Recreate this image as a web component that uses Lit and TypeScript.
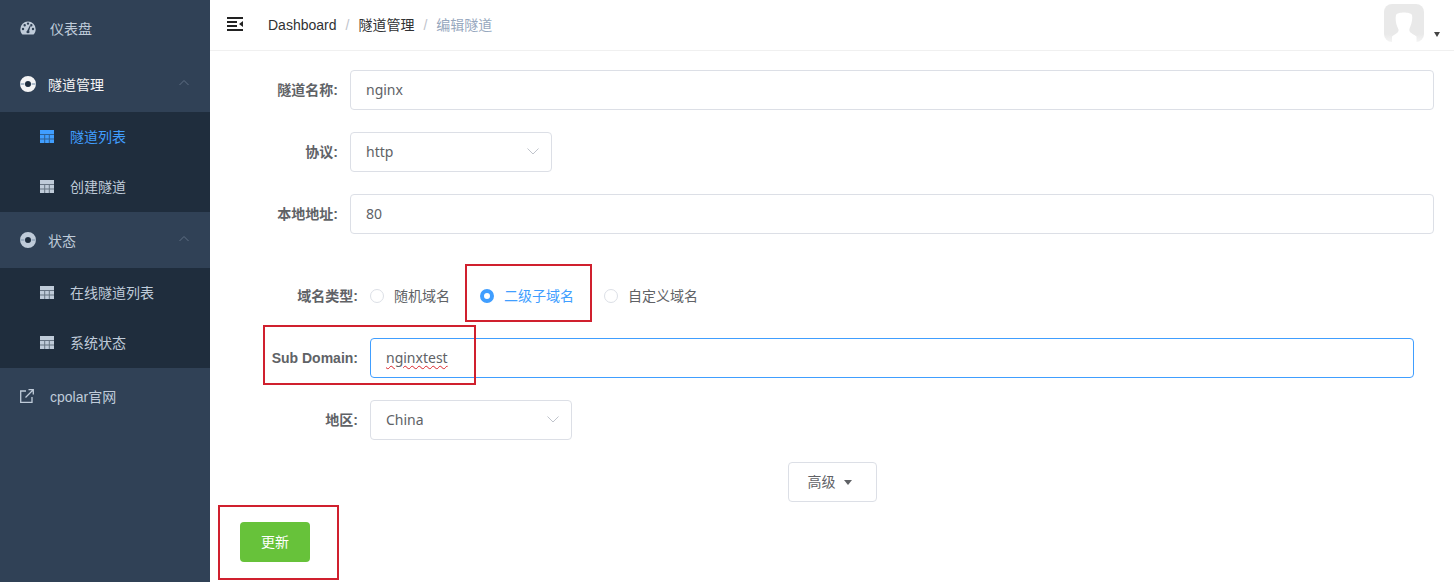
import { LitElement, html, css, svg } from "lit";
import { customElement } from "lit/decorators.js";

const gauge = svg`<svg width="16" height="14" viewBox="0 0 16 14"><path fill="currentColor" fill-rule="evenodd" d="M8 0.5a7.7 7.7 0 0 0-7.7 7.7c0 1.9.7 3.7 1.9 5 .2.2.4.3.7.3h10.200c.3 0 .5-.1.7-.3 1.200-1.300 1.900-3.100 1.900-5A7.700 7.700 0 0 0 8 .5zM3 9.200a1.200 1.200 0 1 1 0-2.400 1.200 1.200 0 0 1 0 2.400zm1.700-3.700a1.200 1.200 0 1 1 0-2.400 1.200 1.200 0 0 1 0 2.400zM8 3.800a1.200 1.200 0 1 1 0-2.400 1.200 1.200 0 0 1 0 2.400zm1.600 7.400a1.700 1.700 0 0 1-3.200 0c0-.6.300-1.100.8-1.400l2.800-5.500 .7.300-1.600 5.500c.3.300.5.700.5 1.100zm1.700-5.700a1.200 1.200 0 1 1 0-2.400 1.200 1.200 0 0 1 0 2.400zM13 9.200a1.200 1.200 0 1 1 0-2.400 1.200 1.200 0 0 1 0 2.400z"/></svg>`;
const buoy = svg`<svg width="16" height="16" viewBox="0 0 16 16"><circle cx="8" cy="8" r="5.500" fill="none" stroke="currentColor" stroke-width="5"/><path d="M.4 7.100h4v1.800h-4zM11.600 7.100h4v1.800h-4z" fill="#8fa2b8" opacity=".7"/><circle cx="8" cy="8" r="2.600" fill="#1f2d3d"/></svg>`;
const table = svg`<svg width="14" height="13" viewBox="0 0 14 13"><path fill="currentColor" d="M0 0h14v13H0z"/><path fill="#1f2d3d" opacity=".55" d="M0 4h14v1H0zM0 8.500h14v1H0zM4.200 4h1v9h-1zM8.800 4h1v9h-1z"/></svg>`;
const link = svg`<svg width="14" height="14" viewBox="0 0 14 14" fill="none" stroke="currentColor" stroke-width="1.300"><path d="M6 2H.7v11.300H12V8"/><path d="M5.500 8.500 13 1M8.500.7h4.800v4.800"/></svg>`;
const chevron = svg`<svg width="12" height="7" viewBox="0 0 12 7" fill="none" stroke="currentColor" stroke-width="1"><path d="M1.500 6 6 1.500 10.500 6"/></svg>`;
const chevDown = svg`<svg width="14" height="8" viewBox="0 0 14 8" fill="none" stroke="currentColor" stroke-width="1"><path d="M1.500 1.500 7 7l5.500-5.500"/></svg>`;
const burger = svg`<svg width="16" height="14" viewBox="0 0 16 14"><path fill="#222" d="M0 0h16v2H0zM0 4h10v2H0zM0 8h10v2H0zM0 12h16v2H0zM16 4v6l-4-3z"/></svg>`;
const person = svg`<svg width="40" height="40" viewBox="0 0 40 40"><defs><linearGradient id="av" x1="0" y1="0" x2="0" y2="1"><stop offset=".8" stop-color="#e9e9e9"/><stop offset="1" stop-color="#f4f4f4"/></linearGradient></defs><rect y="1" width="40" height="38" rx="8" fill="url(#av)"/><path fill="#fff" d="M12 12c1-3.500 15-3.500 16 0 .8 3-.2 8-1.500 11-.8 2-1.500 3.500-1 5 .6 2 4.500 3.500 7 5.500V40H8v-6.500c2.500-2 6-3.500 6.500-5.500.4-1.500-.7-3-1.500-5-1.200-3-1.800-8-1-11z"/></svg>`;

@customElement("app-root")
export class AppRoot extends LitElement {
  static styles = css`
    :host { display: block; width: 1454px; height: 582px; overflow: hidden; position: relative; background: #fff;
      font-family: "Liberation Sans", "Noto Sans CJK SC", sans-serif; font-size: 14px; color: #606266; }
    .layout { display: flex; height: 582px; }
    .side { width: 210px; flex: none; background: #304156; color: #bfcbd9; display: flex; flex-direction: column; }
    .item { height: 56px; display: flex; align-items: center; padding-left: 20px; flex: none; }
    .item .ic { width: 30px; display: flex; flex: none; }
    .item.sub-head .ic { width: 28px; }
    .item.sub-head { padding-bottom: 1px; box-sizing: border-box; }
    .item.active { color: #f4f4f5; }
    .item .chev { margin-left: auto; margin-right: 20px; display: flex; color: #5f6f84; margin-top: -3px; }
    .sub { background: #1f2d3d; display: flex; flex-direction: column; }
    .sub a { height: 50px; box-sizing: border-box; padding-bottom: 2px; display: flex; align-items: center; padding-left: 40px; }
    .sub a .ic { width: 30px; display: flex; flex: none; }
    .sub a.on { color: #409eff; }
    .main { flex: 1; min-width: 0; display: flex; flex-direction: column; }
    .top { height: 50px; flex: none; box-sizing: content-box; border-bottom: 1px solid #f0f0f0; display: flex; align-items: center; padding: 0 30px 0 17px; margin-bottom: -1px; }
    .burger { display: flex; margin-right: 25px; margin-top: -2px; }
    .crumbs { display: flex; align-items: center; color: #303133; margin-top: -1px; }
    .crumbs i { font-style: normal; color: #c0c4cc; margin: 0 9px; }
    .crumbs .cjk { padding-bottom: 2px; }
    .crumbs .last { color: #97a8be; }
    .avatar { margin-left: auto; display: flex; align-items: flex-end; gap: 10px; margin-top: -4px; margin-right: -16px; }
    .caret { width: 0; height: 0; border: 3.500px solid transparent; border-top: 5px solid #444; border-bottom: 0; margin-bottom: 6px; }
    .avatar svg { display: block; }
    .form { padding: 20px 20px 0 10px; display: flex; flex-direction: column; gap: 22px; }
    .row { display: flex; align-items: center; min-height: 40px; }
    .row > label { width: 130px; flex: none; box-sizing: border-box; padding-right: 12px; padding-bottom: 2px; text-align: right; font-weight: 700; color: #606266; }
    .row > label.en { padding-bottom: 0; }
    .box { height: 40px; flex: 1; box-sizing: border-box; border: 1px solid #dcdfe6; border-radius: 4px; padding: 0 15px 2px; font: inherit; font-family: "Noto Sans", "Noto Sans CJK SC", sans-serif; color: #606266; outline: none; background: #fff; min-width: 0; }
    .box.focus { border-color: #409eff; display: flex; align-items: center; }
    .wavy { text-decoration: underline wavy #d9262c; text-decoration-thickness: 1px; text-underline-offset: 2px; }
    .select { flex: none; width: 202px; display: flex; align-items: center; justify-content: space-between; color: #606266; padding-right: 11px; }
    .select span { display: flex; color: #c0c4cc; }
    .nested { padding: 0 20px; display: flex; flex-direction: column; gap: 22px; margin-top: 20px; }
    .radios { display: flex; align-items: center; }
    .radio { display: flex; align-items: center; margin-right: 30px; color: #606266; padding-bottom: 2px; }
    .radio b { width: 14px; height: 14px; box-sizing: border-box; border: 1px solid #dcdfe6; border-radius: 50%; margin-right: 10px; margin-top: 2px; display: block; background: #fff; }
    .radio.on { color: #409eff; }
    .radio.on b { border: 4.500px solid #409eff; }
    .more { display: flex; justify-content: center; padding-left: 11px; }
    .btn { height: 40px; box-sizing: border-box; border-radius: 4px; font: inherit; display: inline-flex; align-items: center; cursor: pointer; padding: 0 0 2px; }
    .btn.plain { width: 89px; justify-content: center; gap: 8px; background: #fff; border: 1px solid #dcdfe6; color: #606266; padding-right: 6px; }
    .btn.plain u { width: 0; height: 0; border: 4.500px solid transparent; border-top: 5px solid #606266; border-bottom: 0; margin-top: 2px; }
    .btn.go { width: 70px; justify-content: center; background: #67c23a; border: 0; color: #fff; }
    .actions { margin-top: -2px; }
    .mark { position: absolute; box-sizing: border-box; border: 2px solid #d0202e; pointer-events: none; }
    .m1 { left: 465px; top: 264px; width: 127px; height: 58px; }
    .m2 { left: 263px; top: 325px; width: 213px; height: 60px; }
    .m3 { left: 218px; top: 505px; width: 121px; height: 75px; }
  `;

  render() {
    return html`
      <div class="layout">
        <aside class="side">
          <div class="item"><span class="ic">${gauge}</span>仪表盘</div>
          <div class="item sub-head active"><span class="ic">${buoy}</span>隧道管理<span class="chev">${chevron}</span></div>
          <div class="sub">
            <a class="on"><span class="ic">${table}</span>隧道列表</a>
            <a><span class="ic">${table}</span>创建隧道</a>
          </div>
          <div class="item sub-head"><span class="ic">${buoy}</span>状态<span class="chev">${chevron}</span></div>
          <div class="sub">
            <a><span class="ic">${table}</span>在线隧道列表</a>
            <a><span class="ic">${table}</span>系统状态</a>
          </div>
          <div class="item"><span class="ic">${link}</span>cpolar官网</div>
        </aside>
        <main class="main">
          <header class="top">
            <span class="burger">${burger}</span>
            <nav class="crumbs"><span>Dashboard</span><i>/</i><span class="cjk">隧道管理</span><i>/</i><span class="cjk last">编辑隧道</span></nav>
            <div class="avatar">${person}<span class="caret"></span></div>
          </header>
          <form class="form">
            <div class="row"><label>隧道名称:</label><input class="box" value="nginx" /></div>
            <div class="row"><label>协议:</label><div class="box select">http<span>${chevDown}</span></div></div>
            <div class="row"><label>本地地址:</label><input class="box" value="80" /></div>
            <div class="nested">
              <div class="row"><label>域名类型:</label>
                <div class="radios">
                  <div class="radio"><b></b>随机域名</div>
                  <div class="radio on"><b></b>二级子域名</div>
                  <div class="radio"><b></b>自定义域名</div>
                </div>
              </div>
              <div class="row"><label class="en">Sub Domain:</label><div class="box focus"><span class="wavy">nginxtest</span></div></div>
              <div class="row"><label>地区:</label><div class="box select">China<span>${chevDown}</span></div></div>
              <div class="more"><button type="button" class="btn plain">高级<u></u></button></div>
              <div class="actions"><button type="button" class="btn go">更新</button></div>
            </div>
          </form>
        </main>
      </div>
      <div class="mark m1"></div>
      <div class="mark m2"></div>
      <div class="mark m3"></div>
    `;
  }
}
